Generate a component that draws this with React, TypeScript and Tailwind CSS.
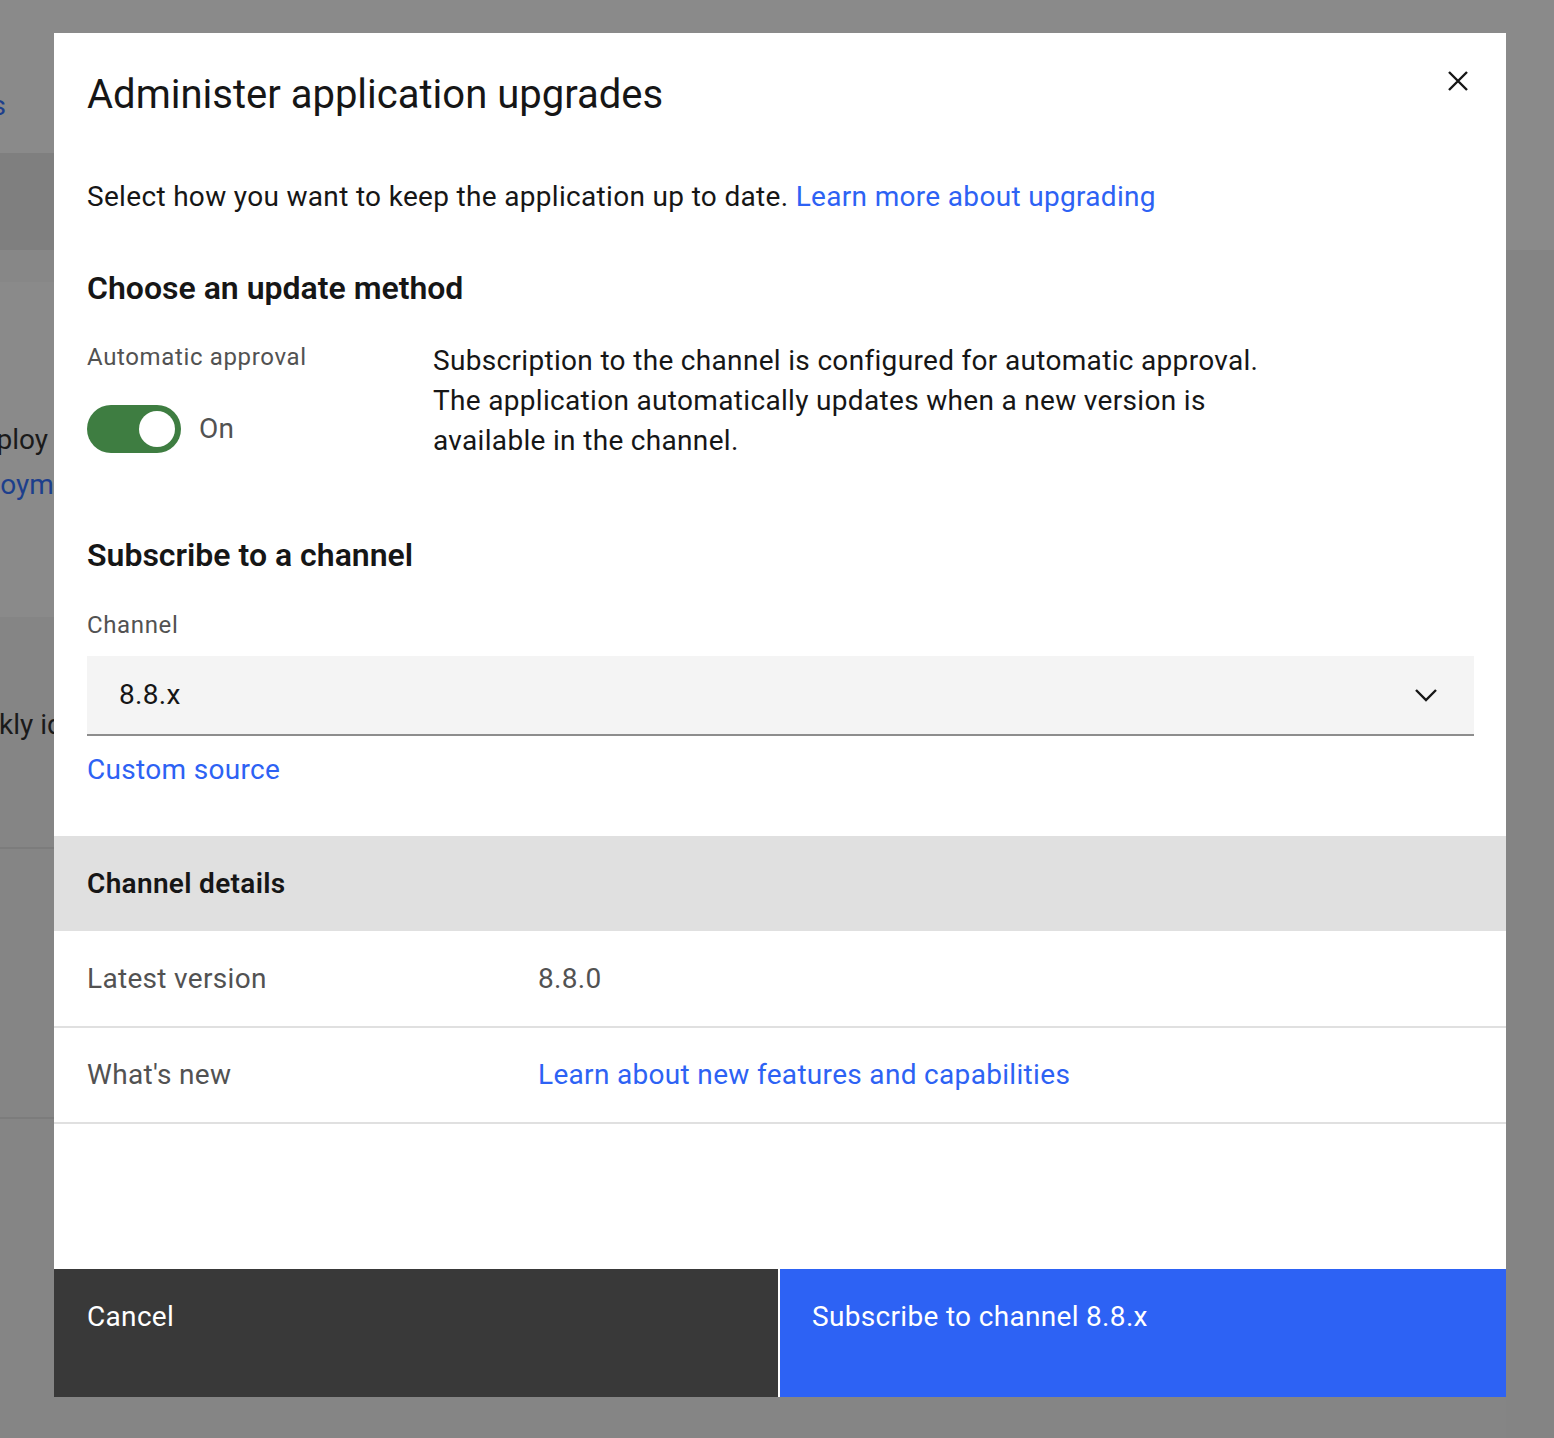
import React from "react";

const FONT = "font-['Roboto','Liberation_Sans',sans-serif]";

function CloseIcon() {
  return (
    <svg width="24" height="24" viewBox="0 0 24 24" fill="none" stroke="#161616" strokeWidth="2.4">
      <path d="M3 3 L21 21 M21 3 L3 21" />
    </svg>
  );
}

function ChevronDown() {
  return (
    <svg width="24" height="14" viewBox="0 0 24 14" fill="none" stroke="#161616" strokeWidth="2.4">
      <path d="M2 2 L12 12 L22 2" />
    </svg>
  );
}

function Toggle({ on }: { on: boolean }) {
  return (
    <div className="flex items-center gap-[18px]">
      <div className="flex h-[48px] w-[94px] items-center justify-end rounded-full bg-[#3e7d41] px-[6px]">
        <div className="h-[36px] w-[36px] rounded-full bg-white" />
      </div>
      <span className="text-[28px] leading-[40px] tracking-[0.32px] text-[#525252]">{on ? "On" : "Off"}</span>
    </div>
  );
}

// dimmed page behind the modal
function Backdrop() {
  return (
    <div className="flex flex-col text-[28px] leading-[40px]">
      <div className="flex h-[153px]">
        <div className="flex w-[6px] justify-end whitespace-nowrap pt-[86px] text-[#1d3f8c]">Settings</div>
      </div>
      <div className="flex h-[97px]">
        <div className="flex-1 bg-[#7f7f7f]" />
        <div className="w-[48px]" />
      </div>
      <div className="flex h-[32px]">
        <div className="flex-1 bg-[#878787]" />
        <div className="w-[48px] bg-[#848484]" />
      </div>
      <div className="flex h-[335px]">
        <div className="flex flex-1 flex-col pt-[138px]">
          <div className="flex w-[48px] justify-end whitespace-nowrap text-[#1a1a1a]">Deploy</div>
          <div className="ml-[-53px] mt-[5px] whitespace-nowrap text-[#1d3f8c]">deployments</div>
        </div>
        <div className="w-[48px] bg-[#848484]" />
      </div>
      <div className="flex h-[821px]">
        <div className="flex flex-1 flex-col bg-[#858585]">
          <div className="ml-[-55px] mt-[88px] whitespace-nowrap text-[#1a1a1a]">Weekly ids</div>
          <div className="mt-[102px] h-[2px] bg-[#7c7c7c]" />
          <div className="mt-[268px] h-[2px] bg-[#7c7c7c]" />
        </div>
        <div className="w-[48px] bg-[#848484]" />
      </div>
    </div>
  );
}

export default function App() {
  return (
    <div className={`relative h-[1438px] w-[1554px] overflow-hidden bg-[#8a8a8a] ${FONT} text-[#161616]`}>
      <Backdrop />

      <div className="absolute left-[54px] top-[33px] flex h-[1364px] w-[1452px] flex-col bg-white">
        <div className="relative pl-[33px] pr-[32px] pt-[34px]">
          <h2 className="text-[40px] font-normal leading-[56px]">Administer application upgrades</h2>
          <button className="absolute right-[36px] top-[36px] flex h-[24px] w-[24px] items-center justify-center">
            <CloseIcon />
          </button>

          <p className="mt-[54px] text-[28px] leading-[40px] tracking-[0.32px]">
            Select how you want to keep the application up to date.{" "}
            <a className="text-[#2d62f4]">Learn more about upgrading</a>
          </p>

          <h3 className="mt-[51px] text-[32px] font-semibold leading-[40px]">Choose an update method</h3>

          <div className="mt-[33px] flex">
            <div className="w-[346px] shrink-0">
              <div className="text-[24px] leading-[32px] tracking-[0.64px] text-[#525252]">Automatic approval</div>
              <div className="mt-[32px]">
                <Toggle on />
              </div>
            </div>
            <p className="w-[860px] text-[28px] leading-[40px] tracking-[0.32px]">
              Subscription to the channel is configured for automatic approval. The application automatically
              updates when a new version is available in the channel.
            </p>
          </div>

          <h3 className="mt-[74px] text-[32px] font-semibold leading-[40px]">Subscribe to a channel</h3>

          <div className="mt-[34px] text-[24px] leading-[32px] tracking-[0.64px] text-[#525252]">Channel</div>
          <div className="mt-[15px] flex h-[80px] items-center justify-between border-b-2 border-[#8d8d8d] bg-[#f4f4f4] pl-[32px] pr-[36px]">
            <span className="text-[28px] leading-[40px] tracking-[0.32px]">8.8.x</span>
            <ChevronDown />
          </div>

          <a className="mt-[14px] block text-[28px] leading-[40px] tracking-[0.32px] text-[#2d62f4]">Custom source</a>
        </div>

        <div className="mt-[46px]">
          <div className="flex h-[95px] items-center bg-[#e0e0e0] pl-[33px]">
            <span className="text-[28px] font-semibold leading-[40px] tracking-[0.32px]">Channel details</span>
          </div>
          <div className="flex h-[97px] items-center border-b-2 border-[#e0e0e0] pl-[33px] text-[28px] leading-[40px] tracking-[0.32px] text-[#525252]">
            <span className="w-[451px]">Latest version</span>
            <span>8.8.0</span>
          </div>
          <div className="flex h-[96px] items-center border-b-2 border-[#e0e0e0] pl-[33px] text-[28px] leading-[40px] tracking-[0.32px] text-[#525252]">
            <span className="w-[451px]">What's new</span>
            <a className="text-[#2d62f4]">Learn about new features and capabilities</a>
          </div>
        </div>

        <div className="mt-auto flex h-[128px] gap-[2px] text-[28px] leading-[36px] tracking-[0.32px] text-white">
          <button className="flex w-[724px] shrink-0 items-start bg-[#393939] pl-[33px] pt-[30px] text-left">
            Cancel
          </button>
          <button className="flex flex-1 items-start bg-[#2d62f4] pl-[32px] pt-[30px] text-left">
            Subscribe to channel 8.8.x
          </button>
        </div>
      </div>
    </div>
  );
}
